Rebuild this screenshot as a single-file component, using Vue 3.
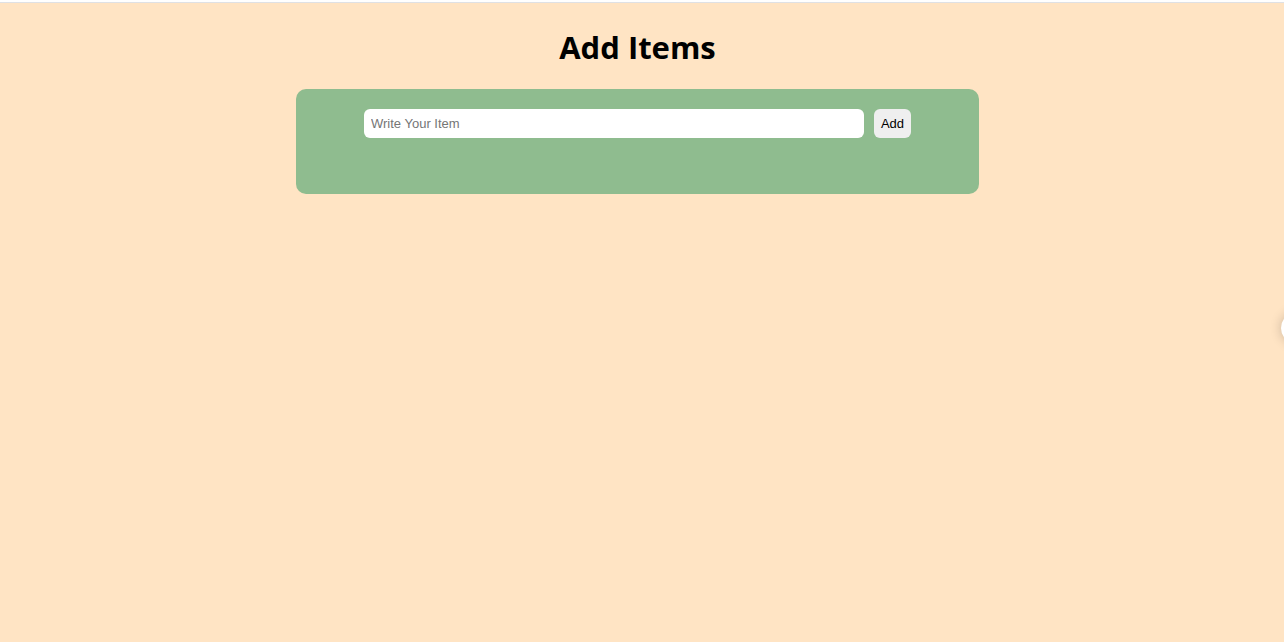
<script setup>
import { ref } from 'vue'

const draft = ref('')
const items = ref([])

function addItem() {
  const text = draft.value.trim()
  if (!text) return
  items.value.push(text)
  draft.value = ''
}
</script>

<template>
  <main class="page">
    <h1 class="title">Add Items</h1>
    <section class="card">
      <form class="entry" @submit.prevent="addItem">
        <input v-model="draft" class="field" type="text" placeholder="Write Your Item" aria-label="Write Your Item" />
        <button class="add" type="submit">Add</button>
      </form>
      <ul class="items">
        <li v-for="(item, i) in items" :key="i">{{ item }}</li>
      </ul>
    </section>
    <span class="handle" aria-hidden="true"></span>
  </main>
</template>

<style>
body {
  background: #ffe4c4;
}
</style>

<style scoped>
.page {
  position: relative;
  box-sizing: border-box;
  min-height: 100vh;
  padding: 24px 9px 24px 0;
  border-top: 2px solid #fff;
  box-shadow: inset 0 1px #dfe1e5;
  background: #ffe4c4;
  overflow: hidden;
  font-family: "Open Sans", "Noto Sans", sans-serif;
}

.title {
  margin: 0 0 20px;
  text-align: center;
  font-size: 31px;
  line-height: 43px;
  font-weight: 700;
  color: #000;
}

.card {
  box-sizing: border-box;
  max-width: 683px;
  margin: 0 auto;
  padding: 20px;
  border-radius: 10px;
  background: #8fbc8f;
}

.entry {
  display: flex;
  justify-content: center;
  gap: 10px;
}

.field,
.add {
  box-sizing: border-box;
  height: 29px;
  border: 0;
  border-radius: 6px;
  font-family: "Liberation Sans", Arial, sans-serif;
  font-size: 13px;
}

.field {
  flex: 0 1 500px;
  min-width: 0;
  padding: 0 7px;
  background: #fff;
  color: #000;
}

.field::placeholder {
  color: #757575;
}

.add {
  min-width: 37px;
  padding: 0 6px;
  background: #efefef;
  color: #000;
}

.items {
  min-height: 20px;
  margin: 16px 0 0;
  padding: 0;
  list-style: none;
}

.handle {
  position: absolute;
  top: 310px;
  right: -29px;
  width: 32px;
  height: 32px;
  border-radius: 50%;
  background: #fff;
  box-shadow: 0 0 12px rgba(0, 0, 0, 0.2);
}
</style>
